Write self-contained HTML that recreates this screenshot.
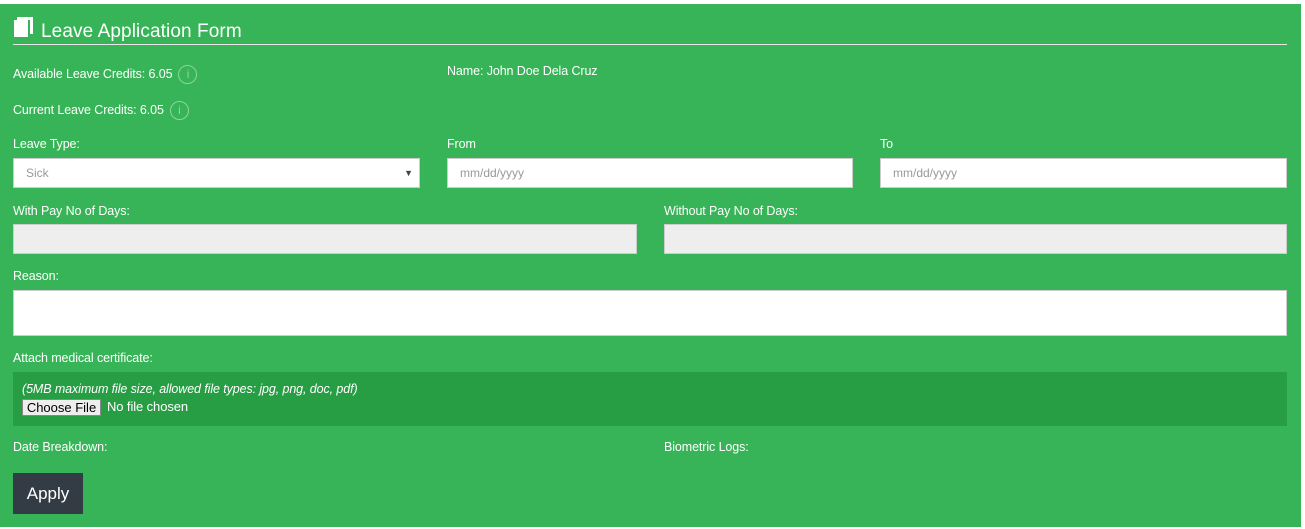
<!DOCTYPE html>
<html><head><style>
body{margin:0;background:#fff;width:1305px;height:529px;overflow:hidden;font-family:"Liberation Sans",sans-serif;}
.g{position:absolute;left:0;top:4px;width:1301px;height:523px;background:#37b457;color:#fff;}
.a{position:absolute;font-size:12.5px;color:#fff;white-space:nowrap;letter-spacing:-0.1px}
.in{position:absolute;background:#fff;border:1px solid #ccc;box-sizing:border-box;font-size:12px;color:#999;padding-left:12px;line-height:28px}
.gr{position:absolute;background:#eee;border:1px solid #ccc;box-sizing:border-box}
.i{display:inline-block;width:17px;height:17px;border:1px solid #8fd49f;border-radius:50%;color:#8fd49f;font-size:12px;text-align:center;line-height:17px;vertical-align:middle;margin-left:6px}
</style></head><body>
<div class="g">
<div style="position:absolute;left:14px;top:16px;width:14px;height:17px;background:#fff;border-right:2px solid #37b457;box-shadow:3px -3px 0 0 #fff"></div>
<div class="a" style="left:41px;top:17px;font-size:19px;letter-spacing:0.1px">Leave Application Form</div>
<div style="position:absolute;left:13px;top:40px;width:1274px;height:1px;background:#e6e6e6"></div>
<div class="a" style="left:13px;top:61px">Available Leave Credits: 6.05<span class="i">i</span></div>
<div class="a" style="left:447px;top:60px">Name: John Doe Dela Cruz</div>
<div class="a" style="left:13px;top:97px">Current Leave Credits: 6.05<span class="i">i</span></div>
<div class="a" style="left:13px;top:133px">Leave Type:</div>
<div class="a" style="left:447px;top:133px">From</div>
<div class="a" style="left:880px;top:133px">To</div>
<div class="in" style="left:13px;top:154px;width:407px;height:30px">Sick<span style="position:absolute;right:6px;color:#444;font-size:9px">▼</span></div>
<div class="in" style="left:447px;top:154px;width:406px;height:30px">mm/dd/yyyy</div>
<div class="in" style="left:880px;top:154px;width:407px;height:30px">mm/dd/yyyy</div>
<div class="a" style="left:13px;top:200px">With Pay No of Days:</div>
<div class="a" style="left:664px;top:200px">Without Pay No of Days:</div>
<div class="gr" style="left:13px;top:220px;width:624px;height:30px"></div>
<div class="gr" style="left:664px;top:220px;width:623px;height:30px"></div>
<div class="a" style="left:13px;top:265px">Reason:</div>
<div class="in" style="left:13px;top:286px;width:1274px;height:46px"></div>
<div class="a" style="left:13px;top:347px">Attach medical certificate:</div>
<div style="position:absolute;left:13px;top:368px;width:1274px;height:54px;background:#279d44"></div>
<div class="a" style="left:22px;top:378px;font-style:italic">(5MB maximum file size, allowed file types: jpg, png, doc, pdf)</div>
<div style="position:absolute;left:22px;top:395px;width:79px;height:17px;background:#eee;border:1px solid #888;box-sizing:border-box;color:#000;font-size:13px;text-align:center;line-height:15px">Choose File</div>
<div class="a" style="left:107px;top:395px;font-size:13px">No file chosen</div>
<div class="a" style="left:13px;top:436px">Date Breakdown:</div>
<div class="a" style="left:664px;top:436px">Biometric Logs:</div>
<div style="position:absolute;left:13px;top:469px;width:70px;height:41px;background:#333c44;color:#fff;font-size:17px;text-align:center;line-height:41px">Apply</div>
</div>
</body></html>
